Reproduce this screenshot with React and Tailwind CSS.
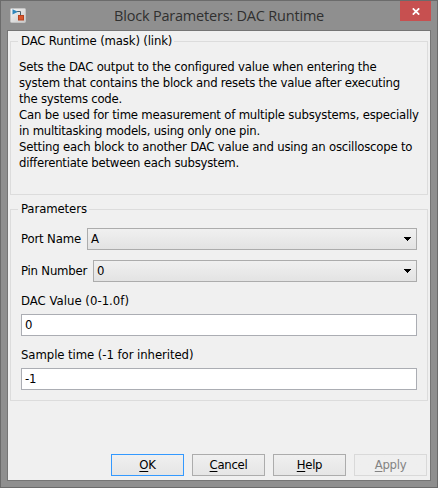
import React from "react";

const description = [
  ["Sets the DAC output to the configured value when entering the", "tracking-[-0.21px]"],
  ["system that contains the block and resets the value after executing", "tracking-[-0.235px]"],
  ["the systems code.", "tracking-[-0.23px]"],
  ["Can be used for time measurement of multiple subsystems, especially", "tracking-[-0.2px]"],
  ["in multitasking models, using only one pin.", "tracking-[-0.25px]"],
  ["Setting each block to another DAC value and using an oscilloscope to", "tracking-[-0.2px]"],
  ["differentiate between each subsystem.", "tracking-[-0.24px]"],
];

function BlockIcon() {
  return (
    <svg width="16" height="15" viewBox="0 0 16 15" className="ml-[9px] mt-[7px] shrink-0">
      <defs>
        <linearGradient id="iconBg" x1="0" y1="0" x2="1" y2="1">
          <stop offset="0" stopColor="#f6f6f6" />
          <stop offset="1" stopColor="#c8c8c8" />
        </linearGradient>
      </defs>
      <rect x="0.5" y="0.5" width="15" height="14" rx="1" fill="url(#iconBg)" stroke="#c4c4c4" />
      <path d="M7 3.5h3.5v4" fill="none" stroke="#4c5f6b" />
      <path d="M2.5 1.2v5.2L8 3.8z" fill="#2f86bb" />
      <rect x="8.5" y="7.5" width="5" height="4.5" fill="#d9562c" stroke="#b5421f" />
    </svg>
  );
}

function Group({ title, titleClass, className, children }) {
  return (
    <fieldset className={"relative min-w-0 border border-[#dcdcdc] " + className}>
      <span className={"absolute left-[7px] top-[-9px] bg-[#f0f0f0] pl-[3px] pr-[2px] leading-4 whitespace-nowrap " + titleClass}>
        {title}
      </span>
      {children}
    </fieldset>
  );
}

function Combo({ label, labelClass, value }) {
  return (
    <div className="flex h-[22px] items-center">
      <span className={"shrink-0 whitespace-nowrap " + labelClass}>{label}</span>
      <div className="flex h-[22px] flex-1 items-center justify-between border border-[#acacac] bg-linear-to-b from-[#f0f0f0] to-[#e3e3e3] pl-[3px] pr-[5px]">
        <span>{value}</span>
        <svg width="7" height="4" viewBox="0 0 7 4" shapeRendering="crispEdges">
          <path d="M0 0h7v1h-1v1h-1v1h-1v1h-1v-1h-1v-1h-1v-1h-1z" fill="#000" />
        </svg>
      </div>
    </div>
  );
}

function Field({ label, labelClass, value }) {
  return (
    <div>
      <div className={"h-4 whitespace-nowrap leading-4 " + labelClass}>{label}</div>
      <div className="mt-[5px] flex h-[22px] items-center border border-[#abadb3] bg-white pl-[3px]">{value}</div>
    </div>
  );
}

function Button({ accel, rest, className }) {
  return (
    <button className={"flex h-[22px] w-[73px] items-center justify-center border bg-linear-to-b leading-4 " + className}>
      <span><span className="underline underline-offset-2">{accel}</span>{rest}</span>
    </button>
  );
}

export default function App() {
  return (
    <div className="flex h-[488px] w-[438px] flex-col border border-[#6b6b6b] bg-[#8f8f8f] font-['DejaVu_Sans_Condensed','DejaVu_Sans',sans-serif] text-[13px] leading-4 tracking-[-0.3px] text-black">
      <header className="relative flex h-[29px]">
        <BlockIcon />
        <h1 className="absolute left-[113px] top-[5px] font-['Open_Sans',sans-serif] text-[14.5px] leading-5 tracking-[-0.2px] whitespace-nowrap text-[#303030]">
          Block Parameters: DAC Runtime
        </h1>
        <div className="ml-auto mr-[6px] flex h-5 w-[31px] items-center justify-center bg-[#c75050]">
          <svg width="8" height="7" viewBox="0 0 8 7">
            <path d="M0.8 0.3l6.4 6.4M7.2 0.3L0.8 6.7" stroke="#fff" strokeWidth="1.7" />
          </svg>
        </div>
      </header>
      <main className="mx-[6px] mb-[6px] flex flex-1 flex-col border border-[#757575] bg-[#f0f0f0] px-[2px] pt-[10px]">
        <Group title="DAC Runtime (mask) (link)" titleClass="tracking-[-0.15px]" className="h-[154px] pl-2 pt-[17px]">
          {description.map(([line, spacing]) => (
            <p key={line} className={"h-4 whitespace-nowrap " + spacing}>{line}</p>
          ))}
        </Group>
        <Group title="Parameters" titleClass="tracking-[-0.1px]" className="mt-[14px] flex h-[192px] flex-col px-[10px] pt-[18px]">
          <Combo label="Port Name" labelClass="w-[66px] tracking-[-0.15px]" value="A" />
          <div className="h-[10px]" />
          <Combo label="Pin Number" labelClass="w-[72px] tracking-[-0.2px]" value="0" />
          <div className="h-[11px]" />
          <Field label="DAC Value (0-1.0f)" labelClass="tracking-[0.02px]" value="0" />
          <div className="h-[11px]" />
          <Field label="Sample time (-1 for inherited)" labelClass="tracking-[-0.07px]" value="-1" />
        </Group>
        <footer className="mt-[53px] flex justify-end gap-2 pr-[1px]">
          <Button accel="O" rest="K" className="border-[#3399ff] from-[#f0f0f0] to-[#e5e5e5]" />
          <Button accel="C" rest="ancel" className="border-[#acacac] from-[#f0f0f0] to-[#e5e5e5]" />
          <Button accel="H" rest="elp" className="border-[#acacac] from-[#f0f0f0] to-[#e5e5e5]" />
          <Button accel="A" rest="pply" className="border-[#d9d9d9] from-[#efefef] to-[#efefef] text-[#838383]" />
        </footer>
      </main>
    </div>
  );
}
